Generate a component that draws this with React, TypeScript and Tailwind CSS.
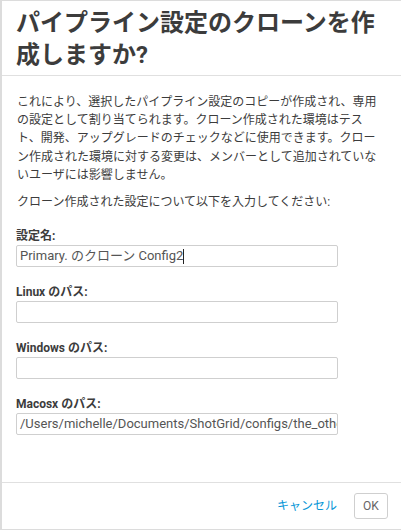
import React from 'react';

const fields = [
  { label: '設定名:', value: 'Primary. のクローン Config2', cursor: true },
  { label: 'Linux のパス:', value: '' },
  { label: 'Windows のパス:', value: '' },
  { label: 'Macosx のパス:', value: '/Users/michelle/Documents/ShotGrid/configs/the_other_config' },
];

export default function App(): JSX.Element {
  return (
    <div
      className="w-[401px] h-[530px] bg-white border-l-2 border-t border-b border-[#dcdcdc] flex flex-col text-[#3c3c3c] overflow-hidden"
      style={{ fontFamily: 'Roboto, "Noto Sans CJK JP", sans-serif' }}
    >
      {/* Header */}
      <div className="pl-[14px] pr-2 pt-[6px] pb-[4px] border-b border-[#e0e0e0]">
        <h1 className="text-[24px] leading-[32px] font-bold text-[#3c3c3c] whitespace-nowrap">
          パイプライン設定のクローンを作
          <br />
          成しますか?
        </h1>
      </div>

      {/* Body */}
      <div className="flex-1 pl-[15px] pr-3 pt-[17px]">
        <p className="text-[12px] leading-[18.2px] text-[#3c3c3c] whitespace-nowrap">
          これにより、選択したパイプライン設定のコピーが作成され、専用
          <br />
          の設定として割り当てられます。クローン作成された環境はテス
          <br />
          ト、開発、アップグレードのチェックなどに使用できます。クロー
          <br />
          ン作成された環境に対する変更は、メンバーとして追加されていな
          <br />
          いユーザには影響しません。
        </p>
        <p className="mt-[9px] text-[12px] leading-[18px] text-[#3c3c3c]">
          クローン作成された設定について以下を入力してください:
        </p>

        <div className="mt-[16px] flex flex-col gap-[16px] -ml-px">
          {fields.map((f) => (
            <div key={f.label} className="flex flex-col">
              <label className="text-[12px] leading-[18px] font-bold text-[#3c3c3c]">{f.label}</label>
              <div className="w-[322px] h-[22px] border border-[#cfcfcf] rounded-[2px] flex items-center px-[3px] overflow-hidden">
                <span className="text-[13px] text-[#555] whitespace-nowrap">{f.value}</span>
                {f.cursor && <span className="w-px h-[15px] bg-[#222]" />}
              </div>
            </div>
          ))}
        </div>
      </div>

      {/* Footer */}
      <div className="h-[47px] border-t border-[#e0e0e0] flex items-center justify-end pr-[13px] gap-[17px]">
        <button className="text-[12px] text-[#0696d7]">キャンセル</button>
        <button className="w-[34px] h-[26px] border border-[#cfcfcf] rounded-[3px] text-[12px] text-[#666] flex items-center justify-center">
          OK
        </button>
      </div>
    </div>
  );
}
